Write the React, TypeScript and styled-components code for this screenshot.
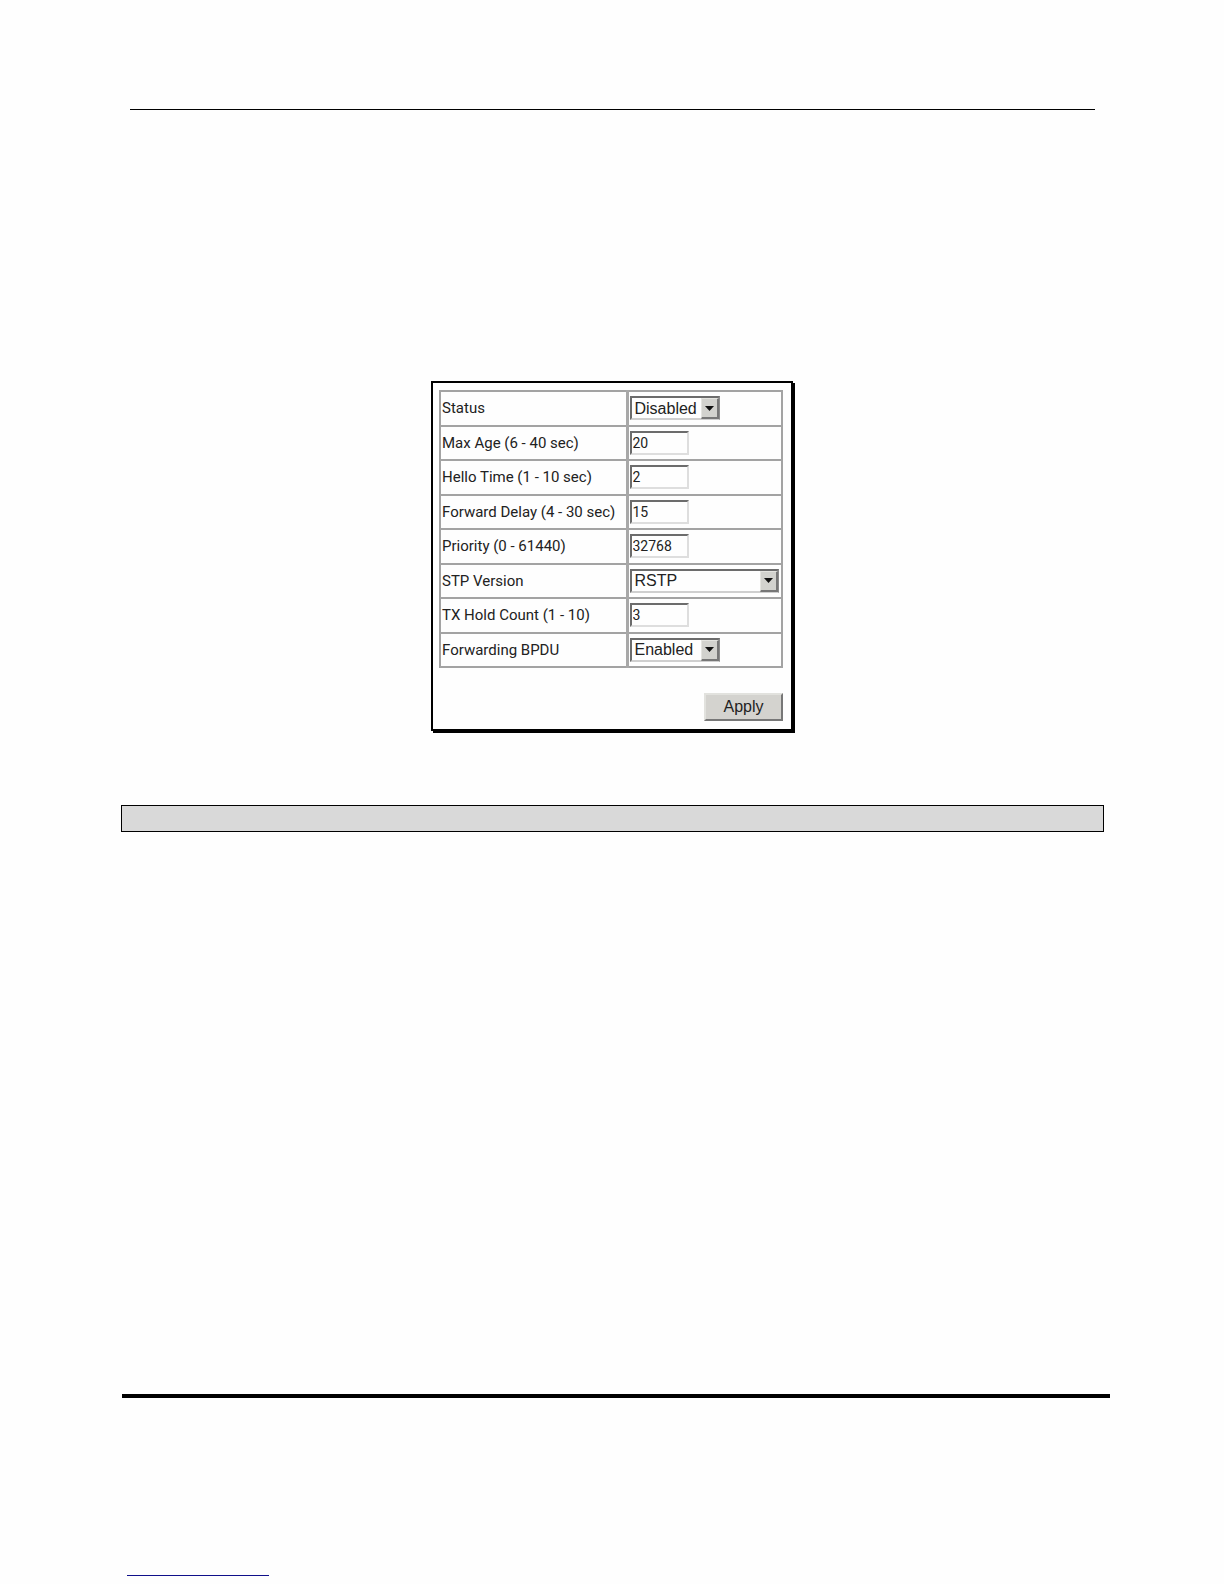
import React, { useId, useState } from 'react';
import styled, { createGlobalStyle } from 'styled-components';

const GlobalStyle = createGlobalStyle`
  *, *::before, *::after { box-sizing: border-box; }
  body {
    margin: 0;
    background: #fefefe;
    color: #222;
    font-family: 'Liberation Sans', Arial, sans-serif;
  }
`;

const Page = styled.div`
  display: flex;
  flex-direction: column;
  padding: 109px 0 8px;
`;

const HeaderRule = styled.hr`
  align-self: stretch;
  height: 1px;
  margin: 0 129px 0 130px;
  border: 0;
  background: #000;
`;

const Main = styled.main`
  display: flex;
  flex-direction: column;
  padding: 271px 120px 0;
`;

const Panel = styled.form`
  align-self: center;
  display: flex;
  flex-direction: column;
  gap: 25px;
  width: 362px;
  padding: 7px 8px 8px 6px;
  border: 2px solid #000;
  background: #fefefe;
  box-shadow: 2px 2px 0 #000;
`;

const SettingsTable = styled.table`
  width: 100%;
  height: 278px;
  border: 2px solid #a3a3a3;
  border-collapse: collapse;
`;

const LabelCell = styled.th`
  width: 187px;
  padding: 0 1px;
  border: 2px solid #a3a3a3;
  border-right: 3px solid #a8a8a8;
  font-family: Roboto, 'Liberation Sans', sans-serif;
  font-size: 15px;
  font-weight: 400;
  line-height: 20px;
  text-align: left;
  white-space: nowrap;
`;

const FieldCell = styled.td`
  padding: 0 1px;
  border: 2px solid #a3a3a3;
`;

const NumberBox = styled.input`
  display: block;
  width: 59px;
  height: 24px;
  padding: 0 1px;
  border: 2px solid;
  border-color: #6c6c6c #dedede #dedede #6c6c6c;
  border-radius: 0;
  background: #fefefe;
  color: #222;
  font-family: Roboto, 'Liberation Sans', sans-serif;
  font-size: 14px;
`;

const SelectFrame = styled.span<{ $wide?: boolean }>`
  position: relative;
  display: block;
  width: ${(p) => (p.$wide ? 149 : 90)}px;
  height: 24px;
`;

const SelectBox = styled.select`
  appearance: none;
  display: block;
  width: 100%;
  height: 100%;
  padding: 0 18px 0 3px;
  border: 2px solid;
  border-color: #6c6c6c #8c8c8c #cfcfcf #6c6c6c;
  border-radius: 0;
  background: #fefefe;
  color: #222;
  font-family: 'Liberation Sans', Arial, sans-serif;
  font-size: 16px;
`;

const ArrowButton = styled.span`
  position: absolute;
  top: 2px;
  right: 1px;
  bottom: 1px;
  display: flex;
  align-items: center;
  justify-content: center;
  width: 18px;
  border: 1px solid;
  border-color: #e4e4e0 #777 #777 #e4e4e0;
  border-right-width: 2px;
  border-bottom-width: 2px;
  background: #d2d2ce;
  pointer-events: none;
`;

const ApplyButton = styled.button`
  align-self: flex-end;
  width: 79px;
  height: 28px;
  padding: 0;
  border: 2px solid;
  border-color: #e2e2de #777 #777 #e2e2de;
  border-radius: 0;
  background: #d4d3cf;
  color: #222;
  font-family: 'Liberation Sans', Arial, sans-serif;
  font-size: 16px;
`;

const SectionBar = styled.div`
  height: 27px;
  margin: 74px 0 0 1px;
  border: 1px solid #000;
  background: #d9d9d9;
`;

const Footer = styled.footer`
  display: flex;
  flex-direction: column;
  padding: 562px 114px 0 122px;
`;

const FooterRule = styled.hr`
  width: 100%;
  height: 4px;
  margin: 0;
  border: 0;
  background: #000;
`;

const LinkRule = styled.div`
  width: 142px;
  height: 1px;
  margin: 177px 0 0 5px;
  background: #10108a;
`;

type Setting = {
  label: string;
  value: string;
  options?: string[];
  wide?: boolean;
};

const settings: Setting[] = [
  { label: 'Status', value: 'Disabled', options: ['Disabled', 'Enabled'] },
  { label: 'Max Age (6 - 40 sec)', value: '20' },
  { label: 'Hello Time (1 - 10 sec)', value: '2' },
  { label: 'Forward Delay (4 - 30 sec)', value: '15' },
  { label: 'Priority (0 - 61440)', value: '32768' },
  { label: 'STP Version', value: 'RSTP', options: ['RSTP'], wide: true },
  { label: 'TX Hold Count (1 - 10)', value: '3' },
  { label: 'Forwarding BPDU', value: 'Enabled', options: ['Enabled', 'Disabled'] },
];

function SettingRow({ label, value, options, wide }: Setting) {
  const id = useId();
  const [current, setCurrent] = useState(value);
  return (
    <tr>
      <LabelCell scope="row">
        <label htmlFor={id}>{label}</label>
      </LabelCell>
      <FieldCell>
        {options ? (
          <SelectFrame $wide={wide}>
            <SelectBox id={id} value={current} onChange={(e) => setCurrent(e.target.value)}>
              {options.map((option) => (
                <option key={option}>{option}</option>
              ))}
            </SelectBox>
            <ArrowButton aria-hidden="true">
              <svg width="9" height="5" viewBox="0 0 9 5">
                <path d="M0 0H9L4.5 5Z" fill="#111" />
              </svg>
            </ArrowButton>
          </SelectFrame>
        ) : (
          <NumberBox
            id={id}
            type="text"
            inputMode="numeric"
            value={current}
            onChange={(e) => setCurrent(e.target.value)}
          />
        )}
      </FieldCell>
    </tr>
  );
}

export default function App() {
  return (
    <>
      <GlobalStyle />
      <Page>
        <HeaderRule />
        <Main>
          <Panel onSubmit={(e) => e.preventDefault()}>
            <SettingsTable>
              <tbody>
                {settings.map((setting) => (
                  <SettingRow key={setting.label} {...setting} />
                ))}
              </tbody>
            </SettingsTable>
            <ApplyButton type="submit">Apply</ApplyButton>
          </Panel>
          <SectionBar />
        </Main>
        <Footer>
          <FooterRule />
          <LinkRule />
        </Footer>
      </Page>
    </>
  );
}
